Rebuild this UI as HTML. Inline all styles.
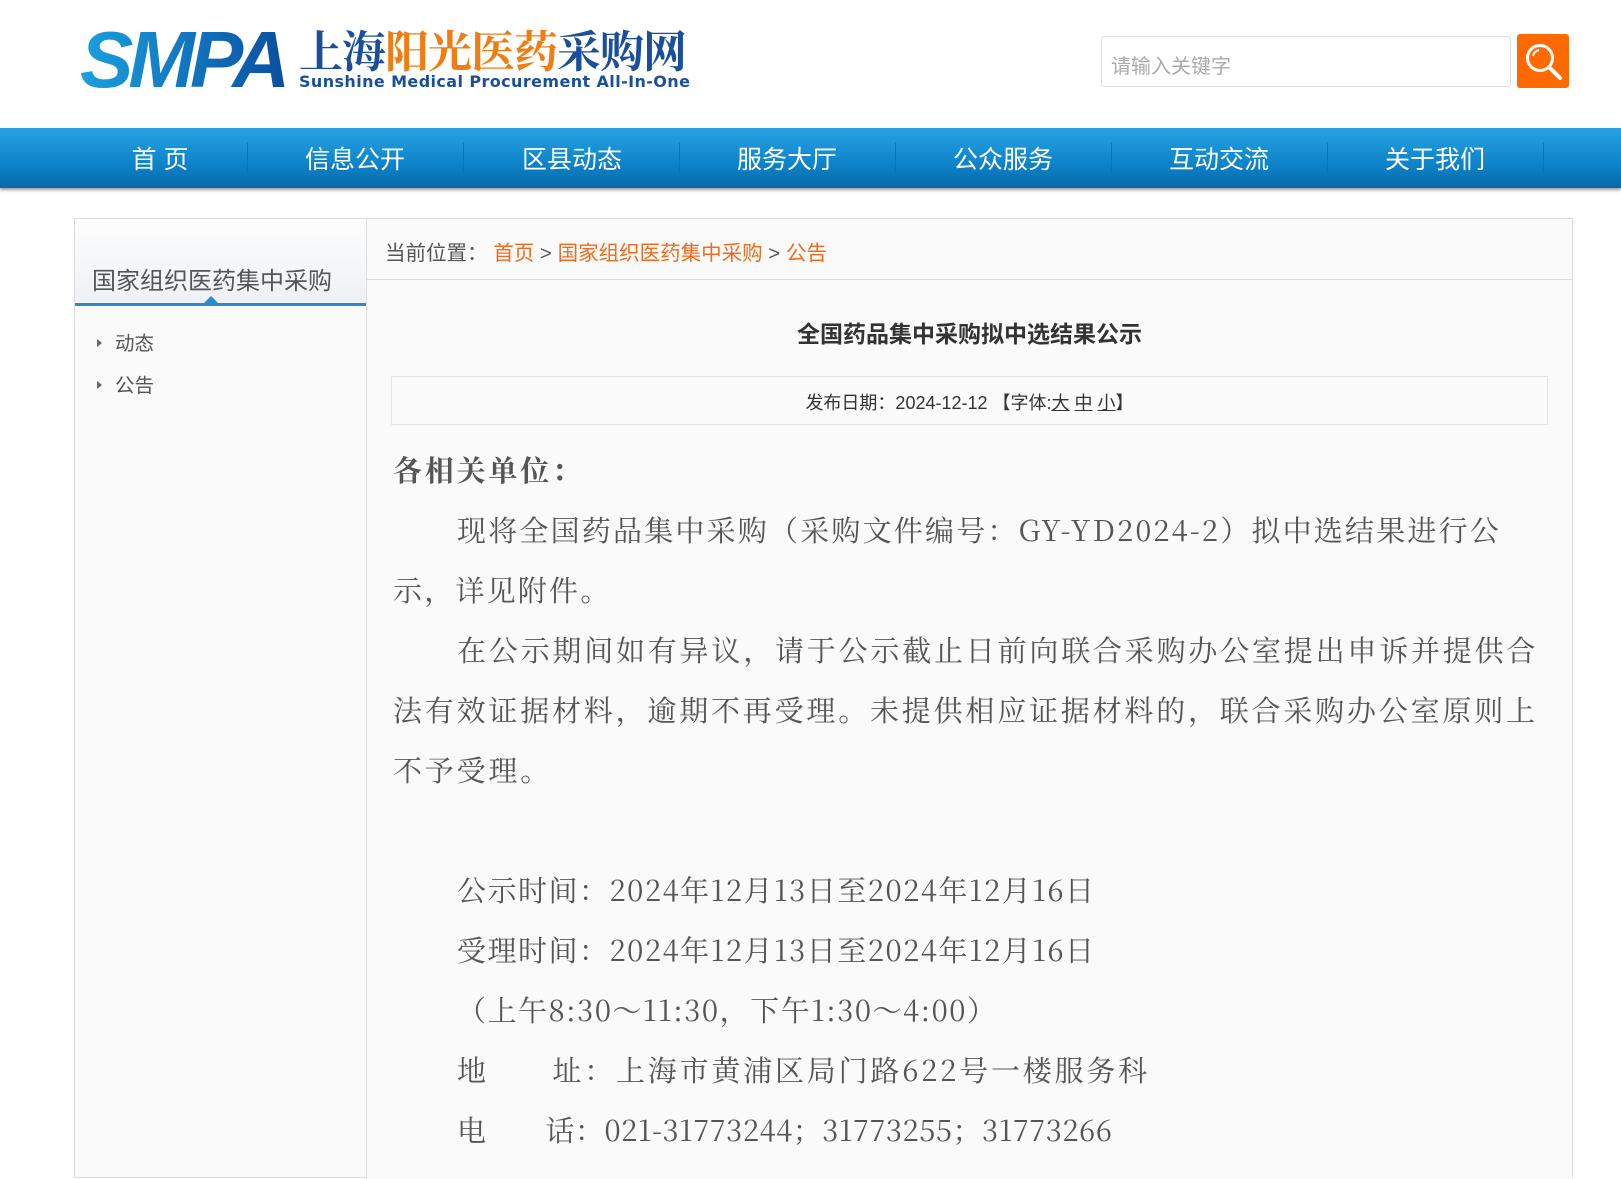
<!DOCTYPE html>
<html><head><meta charset="utf-8"><style>
*{margin:0;padding:0;box-sizing:border-box}
body{width:1621px;height:1164px;overflow:hidden;background:#fff;font-family:"Liberation Sans","Noto Sans CJK SC",sans-serif;position:relative}
.abs{position:absolute}
.smpa{left:80px;top:20px;font:italic bold 80px/1 "Liberation Sans",sans-serif;letter-spacing:-5px;background:linear-gradient(90deg,#1aa0e0,#0a4fa0);-webkit-background-clip:text;color:transparent;white-space:nowrap}
.cn{left:299px;top:26px;font:bold 44px/1 "Noto Serif CJK SC",serif;color:#1b4f9c;letter-spacing:-1px;white-space:nowrap}
.cn span{color:#f07d14}
.en{left:299px;top:74px;font:bold 16px/1 "DejaVu Sans",sans-serif;color:#1b4f9c;letter-spacing:0.4px;white-space:nowrap}
.inp{left:1101px;top:36px;width:410px;height:51px;border:1px solid #ddd;border-radius:3px;font-size:20px;color:#aaa;padding:13px 0 0 9px}
.btn{left:1517px;top:34px;width:52px;height:54px;background:#ff6a00;border-radius:3px}
.nav{left:0;top:128px;width:1621px;height:60px;background:linear-gradient(#27a3e3,#0e83c9 60%,#066aa8);box-shadow:0 2px 3px #999}
.nav div{position:absolute;top:12px;color:#fff;font-size:25px;transform:translateX(-50%);white-space:nowrap}
.sep{position:absolute;top:15px;width:1px;height:31px;background:#0b74b4}
.box{left:74px;top:218px;width:1499px;height:960px;border:1px solid #ddd;background:#fafafa}
.side{left:75px;top:219px;width:291px;height:195px;background:#fafafa}
.sh{left:75px;top:219px;width:291px;height:87px;background:linear-gradient(#fdfdfd,#eef1f5);border-bottom:3px solid #2a8ccc}
.sh span{position:absolute;left:17px;top:42px;font-size:24px;color:#555}
.tri{left:204px;top:296px;width:0;height:0;border-left:7px solid transparent;border-right:7px solid transparent;border-bottom:7px solid #2a8ccc}
.li{left:97px;font-size:19.5px;color:#555}
.li:before{content:"";display:inline-block;border-left:5px solid #666;border-top:4px solid transparent;border-bottom:4px solid transparent;margin-right:13px;vertical-align:3px}
.main{left:366px;top:219px;width:1206px;height:960px;border-left:1px solid #ddd;background:#fafafa}
.bc{left:385px;top:236px;font-size:20.5px;color:#555}
.bc a{color:#f26a1b;text-decoration:none}
.hr{left:367px;top:279px;width:1205px;height:1px;background:#ddd}
.title{left:367px;width:1205px;top:315px;text-align:center;font-weight:bold;font-size:23px;color:#333}
.date{left:391px;top:376px;width:1157px;height:49px;border:1px solid #e5e5e5;text-align:center;font-size:18px;color:#333;padding-top:12px;background:#fbfbfb}
.txt{left:393px;top:440px;width:1152px;font:29px/60px "Noto Serif CJK SC",serif;color:#555;letter-spacing:2.8px}
.txt p{text-indent:64px}
</style></head><body>
<div class="abs smpa">SMPA</div>
<div class="abs cn">上海<span>阳光医药</span>采购网</div>
<div class="abs en">Sunshine Medical Procurement All-In-One</div>
<div class="abs inp">请输入关键字</div>
<div class="abs btn"><svg width="52" height="54" viewBox="0 0 52 54"><circle cx="23" cy="24" r="12.5" fill="none" stroke="#fff" stroke-width="3"/><path d="M32 33 L43 44" stroke="#fff" stroke-width="4" stroke-linecap="round"/><path d="M16 22 a8 8 0 0 1 6 -6" fill="none" stroke="#fff" stroke-width="2"/></svg></div>
<div class="abs nav">
<div style="left:160px">首 页</div><div style="left:355px">信息公开</div><div style="left:572px">区县动态</div><div style="left:787px">服务大厅</div><div style="left:1003px">公众服务</div><div style="left:1219px">互动交流</div><div style="left:1435px">关于我们</div>
<span class="sep" style="left:247px"></span><span class="sep" style="left:463px"></span><span class="sep" style="left:679px"></span><span class="sep" style="left:895px"></span><span class="sep" style="left:1111px"></span><span class="sep" style="left:1327px"></span><span class="sep" style="left:1543px"></span>
</div>
<div class="abs box"></div>
<div class="abs side"></div>
<div class="abs sh"><span>国家组织医药集中采购</span></div>
<div class="abs tri"></div>
<div class="abs li" style="top:327px">动态</div>
<div class="abs li" style="top:369px">公告</div>
<div class="abs main"></div>
<div class="abs bc">当前位置： <a>首页</a> &gt; <a>国家组织医药集中采购</a> &gt; <a>公告</a></div>
<div class="abs hr"></div>
<div class="abs title">全国药品集中采购拟中选结果公示</div>
<div class="abs date">发布日期：2024-12-12 【字体:<u>大</u> <u>中</u> <u>小</u>】</div>
<div class="abs txt">
<div style="font-weight:bold">各相关单位：</div>
<p style="letter-spacing:2.2px">现将全国药品集中采购（采购文件编号：GY-YD2024-2）拟中选结果进行公示，详见附件。</p>
<p>在公示期间如有异议，请于公示截止日前向联合采购办公室提出申诉并提供合法有效证据材料，逾期不再受理。未提供相应证据材料的，联合采购办公室原则上不予受理。</p>
<p>&nbsp;</p>
<p style="letter-spacing:1.5px">公示时间：2024年12月13日至2024年12月16日</p>
<p style="letter-spacing:1.5px">受理时间：2024年12月13日至2024年12月16日</p>
<p style="letter-spacing:1.5px">（上午8:30～11:30，下午1:30～4:00）</p>
<p>地　　址：上海市黄浦区局门路622号一楼服务科</p>
<p style="letter-spacing:0.5px">电　　话：021-31773244；31773255；31773266</p>
</div>
</body></html>
